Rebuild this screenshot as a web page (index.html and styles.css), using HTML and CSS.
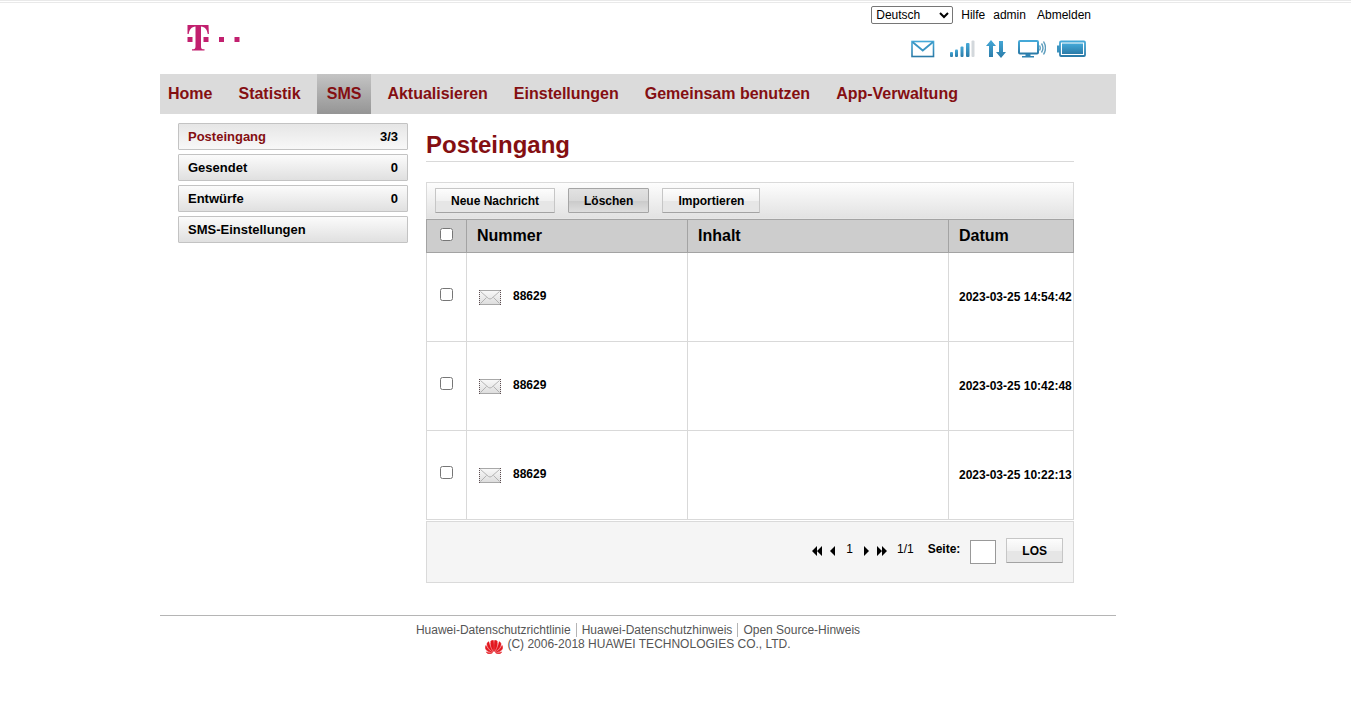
FILE: index.html
```
<!DOCTYPE html>
<html lang="de">
<head>
    <meta charset="UTF-8">
    <meta name="viewport" content="width=device-width, initial-scale=1.0">
    <title>Posteingang</title>
    <link rel="stylesheet" href="styles.css">
</head>
<body>
    <svg class="defs" width="0" height="0" aria-hidden="true">
        <defs>
            <linearGradient id="blue" x1="0" y1="0" x2="0" y2="1">
                <stop offset="0" stop-color="#45a9d8"/>
                <stop offset="1" stop-color="#2b7ba8"/>
            </linearGradient>
            <linearGradient id="paper" x1="0" y1="0" x2="0" y2="1">
                <stop offset="0" stop-color="#fafafa"/>
                <stop offset="1" stop-color="#dcdcdc"/>
            </linearGradient>
            <symbol id="mail" viewBox="0 0 22 15">
                <rect x="0" y="0" width="22" height="15" fill="url(#paper)"/>
                <path d="M0 .5h22M0 14.5h22" stroke="#a8a8a8"/>
                <path d="M.5 0v15M21.5 0v15" stroke="#5c4c50" stroke-dasharray="1 1"/>
                <path d="M1.500 1.500l8 7q1.500 1 3 0l8-7M1.500 13.500l6-6M20.500 13.500l-6-6" fill="none" stroke="#a6a6a6" stroke-width=".8"/>
            </symbol>
        </defs>
    </svg>

    <div class="page">
        <div class="wrapper">
            <header class="header">
                <a class="logo" href="#" aria-label="Home">
                    <svg width="54" height="28" viewBox="0 0 54 28" fill="#c2206f">
                        <path d="M1.500 1h21l.4 9h-1.200C21.200 5.500 19 2.600 15 2.400V22c0 2.800.7 3.200 3.500 3.300v1.200H6v-1.200c2.700-.1 3.500-.5 3.500-3.300V2.400C5.500 2.600 3.300 5.500 2.700 10H1.500z"/>
                        <path d="M1.500 13h5v5h-5zM17.500 13h5v5h-5zM33 13h5v5h-5zM48.500 13h5v5h-5z"/>
                    </svg>
                </a>
                <div class="header-right">
                    <div class="top-links">
                        <select class="lang" aria-label="Sprache">
                            <option>Deutsch</option>
                            <option>English</option>
                        </select>
                        <a href="#">Hilfe</a>
                        <a href="#">admin</a>
                        <a class="logout" href="#">Abmelden</a>
                    </div>
                    <div class="status">
                        <svg width="28" height="20" viewBox="0 0 28 20">
                            <rect x="1" y="2.500" width="21.500" height="15" fill="#fff" stroke="url(#blue)" stroke-width="1.600"/>
                            <path d="M1.500 3l10.250 8.500L22 3" fill="none" stroke="#3b96c4" stroke-width="1.800"/>
                        </svg>
                        <svg width="25" height="20" viewBox="0 0 25 20">
                            <g fill="url(#blue)">
                                <rect x="0" y="13" width="3" height="5" rx="1"/>
                                <rect x="5" y="10.500" width="3" height="7.500" rx="1"/>
                                <rect x="10.500" y="7.500" width="3" height="10.500" rx="1"/>
                                <rect x="16" y="4" width="3.500" height="14" rx="1"/>
                            </g>
                            <rect x="21.500" y="1.500" width="3" height="16.500" rx="1" fill="#d3d8dc"/>
                        </svg>
                        <svg width="20" height="20" viewBox="0 0 20 20">
                            <path d="M5 1l5 6H7v11H3V7H0zM13 2h4v11h3l-5 6-5-6h3z" fill="url(#blue)"/>
                        </svg>
                        <svg width="29" height="20" viewBox="0 0 29 20">
                            <rect x="2" y="2" width="19" height="12.500" rx="1" fill="#fff" stroke="url(#blue)" stroke-width="2"/>
                            <path d="M8.500 15h5v2H17v1.500H5V17h3.500z" fill="#2f83b2"/>
                            <path d="M22.500 6.500q1.500 2.500 0 5M24.500 4.500q3 4.500 0 9M26.500 2.500q4 6.500 0 13" fill="none" stroke="#5d9dbd" stroke-width="1.400"/>
                        </svg>
                        <svg width="29" height="20" viewBox="0 0 29 20">
                            <path d="M0 6.500h3v7H0z" fill="#3b93bf"/>
                            <rect x="3" y="2.500" width="25" height="14.500" rx="1" fill="#fff" stroke="url(#blue)" stroke-width="1.800"/>
                            <rect x="5" y="4.500" width="21" height="10.500" fill="url(#blue)"/>
                        </svg>
                    </div>
                </div>
            </header>

            <nav class="menu">
                <a href="#">Home</a>
                <a href="#">Statistik</a>
                <a class="active" href="#">SMS</a>
                <a href="#">Aktualisieren</a>
                <a href="#">Einstellungen</a>
                <a href="#">Gemeinsam benutzen</a>
                <a href="#">App-Verwaltung</a>
            </nav>

            <div class="content">
                <aside class="sidebar">
                    <a class="current" href="#"><span>Posteingang</span><span class="count">3/3</span></a>
                    <a href="#"><span>Gesendet</span><span class="count">0</span></a>
                    <a href="#"><span>Entwürfe</span><span class="count">0</span></a>
                    <a href="#"><span>SMS-Einstellungen</span></a>
                </aside>

                <main class="main">
                    <h1>Posteingang</h1>

                    <div class="toolbar">
                        <button class="btn" type="button">Neue Nachricht</button>
                        <button class="btn pressed" type="button">Löschen</button>
                        <button class="btn" type="button">Importieren</button>
                    </div>

                    <table class="sms-table">
                        <thead>
                            <tr>
                                <th class="col-check"><input type="checkbox" aria-label="Alle auswählen"></th>
                                <th class="col-number">Nummer</th>
                                <th class="col-content">Inhalt</th>
                                <th>Datum</th>
                            </tr>
                        </thead>
                        <tbody>
                            <tr>
                                <td class="col-check"><input type="checkbox" aria-label="Nachricht 1 auswählen"></td>
                                <td><div class="number"><svg width="22" height="15"><use href="#mail"/></svg><span>88629</span></div></td>
                                <td></td>
                                <td class="date">2023-03-25 14:54:42</td>
                            </tr>
                            <tr>
                                <td class="col-check"><input type="checkbox" aria-label="Nachricht 2 auswählen"></td>
                                <td><div class="number"><svg width="22" height="15"><use href="#mail"/></svg><span>88629</span></div></td>
                                <td></td>
                                <td class="date">2023-03-25 10:42:48</td>
                            </tr>
                            <tr>
                                <td class="col-check"><input type="checkbox" aria-label="Nachricht 3 auswählen"></td>
                                <td><div class="number"><svg width="22" height="15"><use href="#mail"/></svg><span>88629</span></div></td>
                                <td></td>
                                <td class="date">2023-03-25 10:22:13</td>
                            </tr>
                        </tbody>
                    </table>

                    <div class="pager">
                        <div class="pages">
                            <a href="#" aria-label="Erste Seite"><svg width="10" height="10" viewBox="0 0 10 10"><path d="M5 0v10L0 5zM10 0v10L5 5z"/></svg></a>
                            <a href="#" aria-label="Vorherige Seite"><svg width="5" height="10" viewBox="0 0 5 10"><path d="M5 0v10L0 5z"/></svg></a>
                            <span class="page-number">1</span>
                            <a href="#" aria-label="Nächste Seite"><svg width="5" height="10" viewBox="0 0 5 10"><path d="M0 0v10l5-5z"/></svg></a>
                            <a href="#" aria-label="Letzte Seite"><svg width="10" height="10" viewBox="0 0 10 10"><path d="M0 0v10l5-5zM5 0v10l5-5z"/></svg></a>
                        </div>
                        <span class="total">1/1</span>
                        <label for="pageInput">Seite:</label>
                        <input type="text" id="pageInput">
                        <button class="btn" type="button">LOS</button>
                    </div>
                </main>
            </div>

            <footer class="footer">
                <div class="footer-links">
                    <a href="#">Huawei-Datenschutzrichtlinie</a>
                    <a href="#">Huawei-Datenschutzhinweis</a>
                    <a href="#">Open Source-Hinweis</a>
                </div>
                <div class="copyright">
                    <svg width="18" height="14" viewBox="0 0 18 14" fill="#e3171e" stroke="#e3171e" stroke-width=".5">
                        <path d="M8.600 11.500C6 8 5 4 6 1.200 6.500.3 7.500 0 8.300.3c.7 3.200.8 7.700.3 11.200z"/>
                        <path d="M9.400 11.500C12 8 13 4 12 1.200 11.500.3 10.500 0 9.700.3c-.7 3.200-.8 7.700-.3 11.200z"/>
                        <path d="M8 11.700C4.500 10 2 7 2 4c0-1 .8-2 1.800-2.300C4.500 5 6 9 8 11.700z"/>
                        <path d="M10 11.700C13.500 10 16 7 16 4c0-1-.8-2-1.800-2.300C13.500 5 12 9 10 11.700z"/>
                        <path d="M7.500 12.200C4 12.500.5 10.500.3 7.600.3 6.800.5 6 .9 5.500 2.500 8.500 5 11 7.500 12.200z"/>
                        <path d="M10.500 12.200c3.500.3 7-1.700 7.200-4.600 0-.8-.2-1.600-.6-2.100-1.600 3-4.100 5.500-6.600 6.700z"/>
                        <path d="M7.500 12.700c-2 1.500-5 1.500-6.300-.8 2 .8 4.200 1 6.300.8zM10.500 12.700c2 1.500 5 1.500 6.300-.8-2 .8-4.200 1-6.300.8z"/>
                    </svg>
                    <span>(C) 2006-2018 HUAWEI TECHNOLOGIES CO., LTD.</span>
                </div>
            </footer>
        </div>
    </div>
</body>
</html>
```
FILE: styles.css
```
* {
    box-sizing: border-box;
}
body {
    margin: 0;
    border-top: 3px double #e9e9e9;
    background-color: #fff;
    color: #000;
    font-family: "Liberation Sans", Arial, sans-serif;
    font-size: 12px;
    line-height: 14px;
}
a {
    color: inherit;
    text-decoration: none;
}
svg {
    display: block;
    flex: none;
}
.defs {
    position: absolute;
}
.page {
    max-width: 1276px;
}
.wrapper {
    max-width: 956px;
    margin: 0 auto;
}

/* header */
.header {
    display: flex;
    justify-content: space-between;
    height: 71px;
    padding: 3px 25px 0 26px;
}
.logo {
    margin-top: 18px;
}
.top-links {
    display: flex;
    align-items: center;
    gap: 8px;
    height: 18px;
}
.lang {
    width: 82px;
    height: 18px;
    padding: 0;
    border: 1px solid #767676;
    border-radius: 2px;
    background-color: #fff;
    color: #000;
    font: 12px "Liberation Sans", Arial, sans-serif;
}
.logout {
    margin-left: 3px;
}
.status {
    display: flex;
    justify-content: flex-end;
    gap: 11px;
    margin: 15px 5px 0 0;
}

/* main menu */
.menu {
    display: flex;
    gap: 6px;
    height: 40px;
    padding-right: 8px;
    background-color: #dbdbdb;
    color: #840f12;
    font-size: 16px;
    font-weight: bold;
    line-height: 39px;
}
.menu a {
    padding: 0 10px;
    white-space: nowrap;
}
.menu a:first-child {
    padding-left: 8px;
}
.menu .active {
    background: linear-gradient(#c4c4c4, #959595);
}

/* content */
.content {
    display: flex;
    gap: 18px;
    padding: 9px 42px 32px 18px;
}
.sidebar {
    display: flex;
    flex: 0 0 230px;
    flex-direction: column;
    gap: 4px;
    font-size: 13px;
    font-weight: bold;
}
.sidebar a {
    display: flex;
    justify-content: space-between;
    height: 27px;
    padding: 0 9px;
    border: 1px solid #c3c3c3;
    border-radius: 1px;
    background: linear-gradient(#fbfbfb, #e0e0e0);
    line-height: 25px;
}
.sidebar .current {
    background: linear-gradient(#e6e6e6, #f8f8f8);
}
.sidebar .current span:first-child {
    color: #840f12;
}
.main {
    flex: 1;
    min-width: 0;
}
h1 {
    margin: 0 0 20px;
    padding: 8px 0 3px;
    border-bottom: 1px solid #d9d9d9;
    color: #840f12;
    font-size: 24px;
    line-height: 27px;
}
.btn {
    height: 25px;
    padding: 0 15px;
    border: 1px solid #c6c6c6;
    border-bottom-color: #a3a3a3;
    border-radius: 1px;
    background: linear-gradient(#fdfdfd, #f1f1f1 50%, #e6e6e6 51%, #e6e6e6);
    color: #000;
    font: bold 12px "Liberation Sans", Arial, sans-serif;
}
.btn.pressed {
    border-color: #a5a5a5;
    background: linear-gradient(#e2e2e2, #d8d8d8 50%, #cacaca 51%, #dedede);
}
.toolbar {
    display: flex;
    align-items: center;
    gap: 13px;
    height: 37px;
    padding: 0 8px;
    border: 1px solid #dadada;
    border-bottom-color: #e6e6e6;
    background: linear-gradient(#fdfdfd, #e2e2e2);
}

/* messages */
.sms-table {
    width: 100%;
    border-collapse: collapse;
    table-layout: fixed;
}
.sms-table th {
    height: 33px;
    padding: 0 10px;
    border: 1px solid #a3a3a3;
    background-color: #cdcdcd;
    font-size: 16px;
    text-align: left;
}
.sms-table td {
    height: 89px;
    padding: 0 10px;
    border: 1px solid #d9d9d9;
    font-weight: bold;
}
.sms-table .col-check {
    width: 40px;
    padding: 0;
    text-align: center;
}
.sms-table .col-number {
    width: 221px;
}
.sms-table .col-content {
    width: 261px;
}
.sms-table input {
    display: block;
    width: 13px;
    height: 13px;
    margin: 0 auto 3px;
}
.sms-table td input {
    margin-bottom: 5px;
}
.sms-table .date {
    padding-right: 0;
    white-space: nowrap;
}
.number {
    display: flex;
    align-items: center;
    gap: 12px;
    padding-left: 2px;
}
.number span {
    padding-bottom: 2px;
}

/* paging */
.pager {
    display: flex;
    align-items: center;
    justify-content: flex-end;
    height: 62px;
    margin-top: 1px;
    padding: 0 10px 3px 0;
    border: 1px solid #dadada;
    background-color: #f5f5f5;
}
.pages {
    display: flex;
    align-items: center;
    gap: 8px;
}
.page-number {
    padding: 0 3px 3px;
}
.total {
    margin: 0 14px 3px 10px;
}
.pager label {
    margin-bottom: 3px;
    font-weight: bold;
}
.pager input {
    width: 26px;
    height: 24px;
    margin: 3px 10px 0;
    border: 1px solid #999;
    background-color: #fff;
}

/* footer */
.footer {
    padding-top: 7px;
    border-top: 1px solid #b5b5b5;
    color: #555;
}
.footer-links,
.copyright {
    display: flex;
    justify-content: center;
}
.footer-links a + a {
    margin-left: 5px;
    padding-left: 5px;
    border-left: 1px solid #b5b5b5;
}
.copyright {
    gap: 4px;
}
.copyright svg {
    margin-top: 3px;
}
```
